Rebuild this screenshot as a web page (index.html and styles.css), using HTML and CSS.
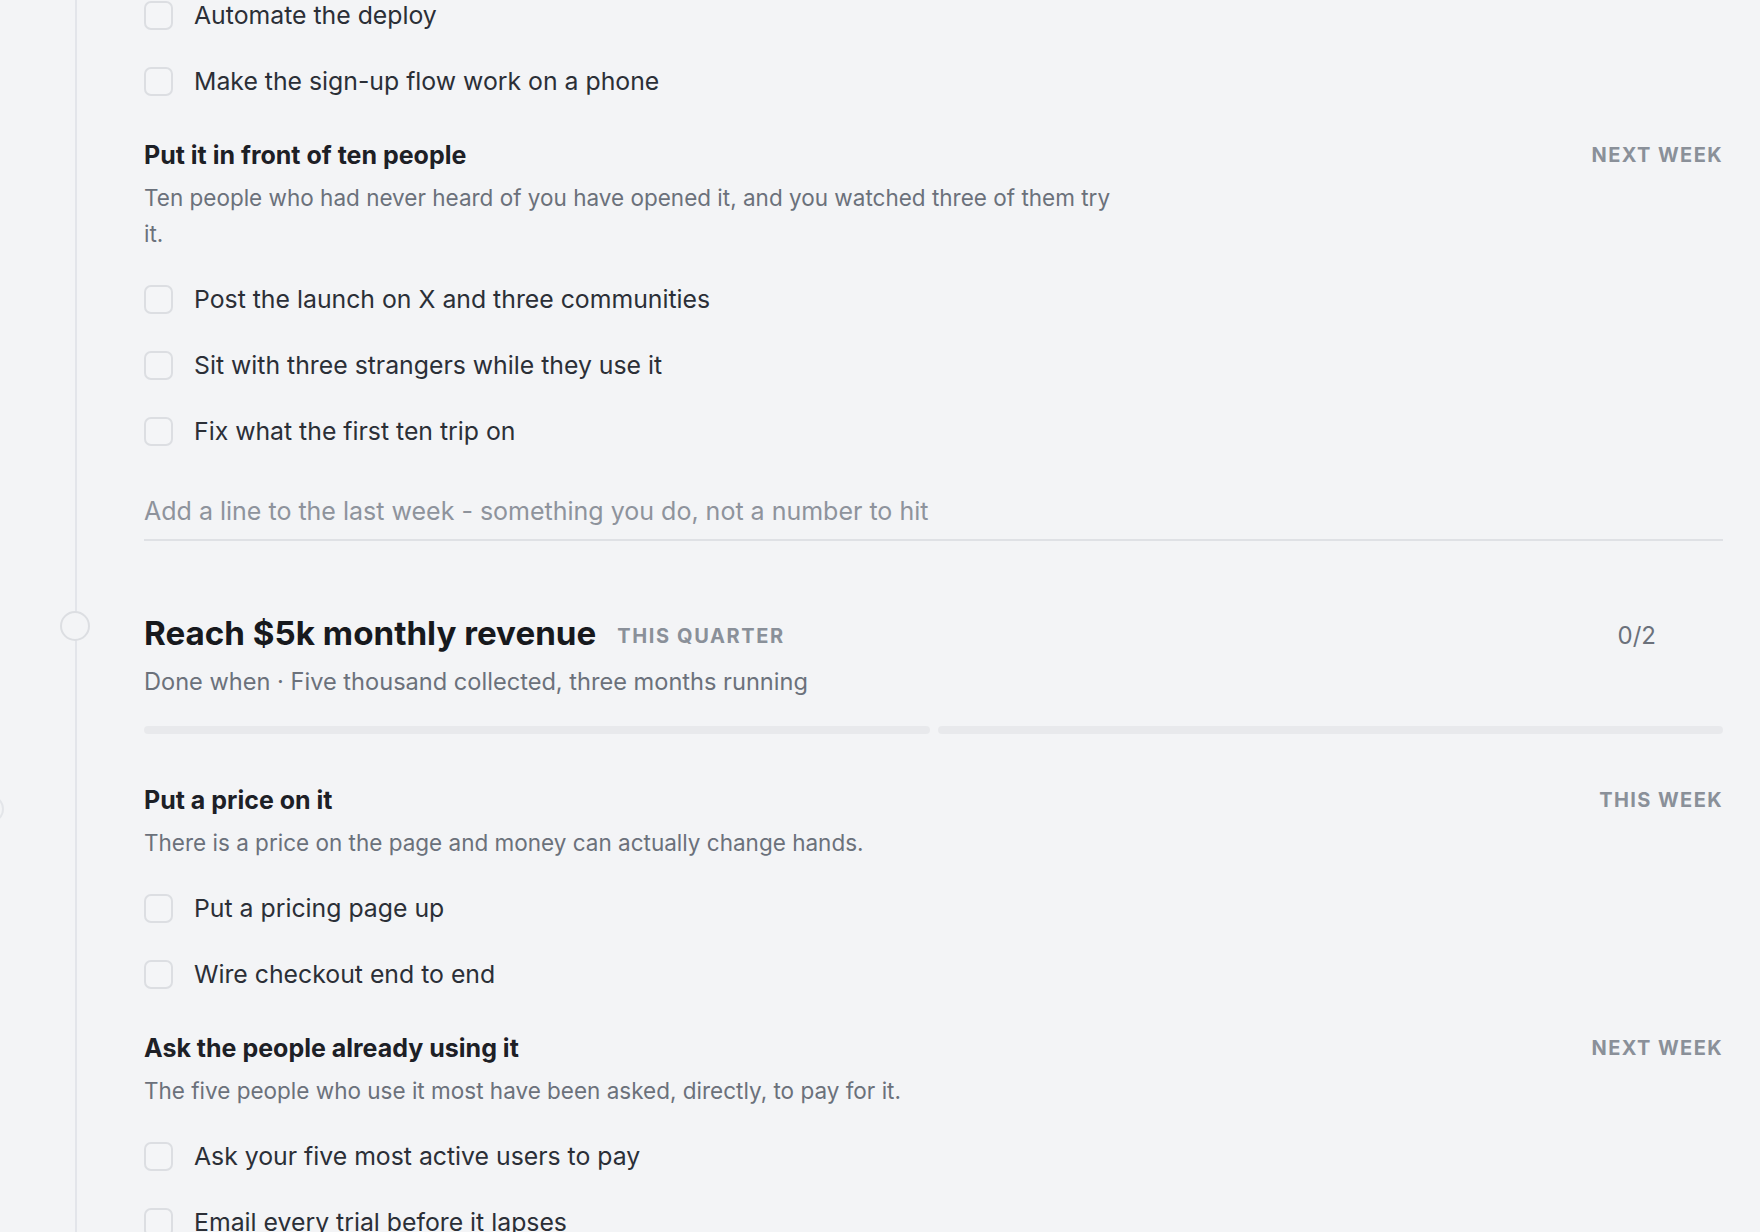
FILE: index.html
```html
<!DOCTYPE html>
<html lang="en">
<head>
<meta charset="utf-8">
<title>Roadmap</title>
<link rel="stylesheet" href="styles.css">
</head>
<body>
<div class="edge-dot"></div>
<main class="timeline">
  <section class="tasks first">
    <div class="task"><span class="cb"></span><span class="task-text">Automate the deploy</span></div>
    <div class="task"><span class="cb"></span><span class="task-text">Make the sign-up flow work on a phone</span></div>
  </section>

  <section class="milestone">
    <div class="ms-head"><h3 class="ms-title">Put it in front of ten people</h3><span class="when">Next week</span></div>
    <p class="ms-desc">Ten people who had never heard of you have opened it, and you watched three of them try it.</p>
    <div class="tasks">
      <div class="task"><span class="cb"></span><span class="task-text">Post the launch on X and three communities</span></div>
      <div class="task"><span class="cb"></span><span class="task-text">Sit with three strangers while they use it</span></div>
      <div class="task"><span class="cb"></span><span class="task-text">Fix what the first ten trip on</span></div>
    </div>
  </section>

  <div class="add-line">Add a line to the last week - something you do, not a number to hit</div>

  <section class="goal">
    <div class="goal-head">
      <span class="goal-dot"></span>
      <h2 class="goal-title">Reach $5k monthly revenue</h2>
      <span class="goal-when">This quarter</span>
      <span class="goal-count">0/2</span>
    </div>
    <p class="goal-done">Done when · Five thousand collected, three months running</p>
    <div class="bars"><span class="bar"></span><span class="bar"></span></div>
  </section>

  <section class="milestone">
    <div class="ms-head"><h3 class="ms-title">Put a price on it</h3><span class="when">This week</span></div>
    <p class="ms-desc">There is a price on the page and money can actually change hands.</p>
    <div class="tasks">
      <div class="task"><span class="cb"></span><span class="task-text">Put a pricing page up</span></div>
      <div class="task"><span class="cb"></span><span class="task-text">Wire checkout end to end</span></div>
    </div>
  </section>

  <section class="milestone">
    <div class="ms-head"><h3 class="ms-title">Ask the people already using it</h3><span class="when">Next week</span></div>
    <p class="ms-desc">The five people who use it most have been asked, directly, to pay for it.</p>
    <div class="tasks">
      <div class="task"><span class="cb"></span><span class="task-text">Ask your five most active users to pay</span></div>
      <div class="task"><span class="cb"></span><span class="task-text">Email every trial before it lapses</span></div>
    </div>
  </section>
</main>
</body>
</html>
```

FILE: styles.css
```css
* { box-sizing: border-box; }
html, body { margin: 0; padding: 0; }
body {
  background: #f3f4f6;
  font-family: Inter, "Noto Sans", "Liberation Sans", sans-serif;
  color: #2b2f36;
  height: 1232px;
  overflow: hidden;
  position: relative;
}
.edge-dot {
  position: absolute;
  left: -24px;
  top: 795px;
  width: 28px;
  height: 28px;
  border-radius: 50%;
  border: 2px solid #e3e5e9;
}
.timeline {
  position: relative;
  padding: 0 37px 0 144px;
  margin-top: -3px;
}
.timeline::before {
  content: "";
  position: absolute;
  left: 75px;
  top: 0;
  height: 1300px;
  width: 2px;
  background: #e3e5ea;
}
.tasks {
  display: flex;
  flex-direction: column;
  gap: 30px;
}
.task {
  display: flex;
  align-items: center;
  gap: 21px;
  height: 36px;
}
.cb {
  flex: none;
  width: 29px;
  height: 29px;
  border: 2px solid #dcdee2;
  border-radius: 7px;
  background: #f4f5f7;
}
.task-text {
  font-size: 24.8px;
  line-height: 36px;
  color: #2b2f37;
}
.milestone { margin-top: 41px; }
.ms-head {
  display: flex;
  justify-content: space-between;
  align-items: center;
  height: 30px;
}
.ms-title {
  margin: 0;
  font-size: 25px;
  font-weight: 700;
  color: #1d2026;
}
.when {
  font-size: 20px;
  font-weight: 700;
  text-transform: uppercase;
  letter-spacing: 0.07em;
  color: #8a9099;
}
.ms-desc {
  margin: 10px 0 29px;
  max-width: 990px;
  font-size: 22.5px;
  line-height: 36px;
  color: #6b717b;
}
.add-line {
  margin-top: 44px;
  font-size: 25px;
  line-height: 36px;
  color: #8e939c;
  padding-bottom: 10px;
  border-bottom: 2px solid #dfe1e5;
}
.goal { margin-top: 72px; }
.goal-head {
  position: relative;
  display: flex;
  align-items: center;
  height: 40px;
  padding-right: 67px;
}
.goal-dot {
  position: absolute;
  left: -84px;
  top: -2px;
  width: 30px;
  height: 30px;
  border-radius: 50%;
  border: 2px solid #dcdee2;
  background: #f3f4f6;
}
.goal-title {
  margin: 0;
  font-size: 33.2px;
  font-weight: 700;
  color: #17191d;
}
.goal-when {
  margin-left: 21px;
  margin-top: 6px;
  font-size: 20px;
  font-weight: 700;
  text-transform: uppercase;
  letter-spacing: 0.08em;
  color: #8a9099;
}
.goal-count {
  margin-left: auto;
  margin-top: 4px;
  font-size: 24px;
  color: #6b717b;
}
.goal-done {
  margin: 11px 0 0;
  font-size: 23.6px;
  line-height: 36px;
  color: #6b717b;
}
.bars {
  margin-top: 26px;
  display: flex;
  gap: 8px;
}
.bar {
  flex: 1;
  height: 8px;
  border-radius: 4px;
  background: #e8e9ec;
}
.goal + .milestone { margin-top: 51px; }
```
